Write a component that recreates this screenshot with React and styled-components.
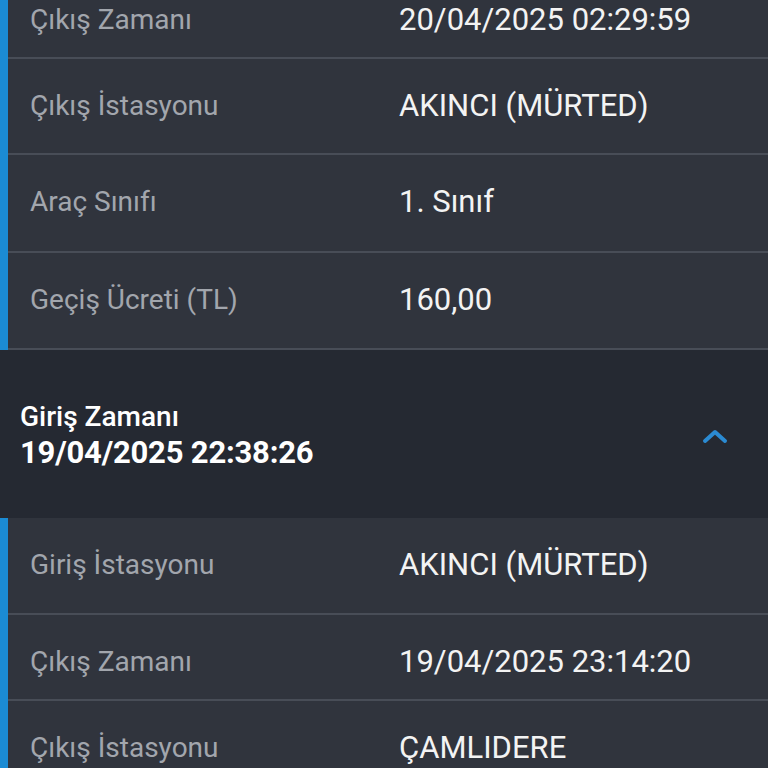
import React from "react";
import styled, { createGlobalStyle } from "styled-components";

const GlobalStyle = createGlobalStyle`
  html, body {
    margin: 0;
    padding: 0;
    background: #30343d;
    overflow: hidden;
  }
  body {
    font-family: Roboto, "Noto Sans", "Liberation Sans", sans-serif;
  }
`;

const Page = styled.div`
  width: 768px;
  height: 768px;
  overflow: hidden;
  display: flex;
  flex-direction: column;
`;

// the screen is scrolled, so the first row is cut off at the top
const Scroller = styled.div`
  margin-top: -27px;
  display: flex;
  flex-direction: column;
`;

const Section = styled.div`
  display: flex;
  background: #30343d;
  border-left: 8px solid #1b8bd3;
`;

const Rows = styled.div`
  flex: 1;
  display: flex;
  flex-direction: column;
`;

const Row = styled.div`
  height: ${(p) => p.$h || 97}px;
  box-sizing: border-box;
  border-bottom: 2px solid #484d57;
  display: grid;
  grid-template-columns: 369px 1fr;
  align-items: center;
  align-content: start;
  padding-left: 22px;
  padding-top: 29px;
  line-height: 36px;
`;

const Label = styled.span`
  font-size: 28px;
  color: #a2a6ad;
`;

const Value = styled.span`
  font-size: 31px;
  color: #f3f3f3;
`;

const Header = styled.div`
  height: 168px;
  background: #252932;
  display: flex;
  align-items: center;
  justify-content: space-between;
  padding: 4px 40px 0 20px;
  box-sizing: border-box;
`;

const HeaderText = styled.div`
  display: flex;
  flex-direction: column;
  color: #ffffff;
`;

const HeaderTitle = styled.span`
  font-size: 28px;
  font-weight: 500;
  line-height: 34px;
`;

const HeaderDate = styled.span`
  font-size: 31px;
  font-weight: 700;
  line-height: 38px;
  letter-spacing: -0.2px;
`;

const Chevron = () => (
  <svg width="26" height="18" viewBox="0 0 26 18">
    <polyline
      points="3,14 13,5 23,14"
      fill="none"
      stroke="#2b8ad2"
      strokeWidth="4"
      strokeLinecap="round"
      strokeLinejoin="round"
    />
  </svg>
);

const firstTrip = [
  { label: "Çıkış Zamanı", value: "20/04/2025 02:29:59", h: 86 },
  { label: "Çıkış İstasyonu", value: "AKINCI (MÜRTED)", h: 96 },
  { label: "Araç Sınıfı", value: "1. Sınıf", h: 98 },
  { label: "Geçiş Ücreti (TL)", value: "160,00", h: 97 },
];

const secondTrip = [
  { label: "Giriş İstasyonu", value: "AKINCI (MÜRTED)", h: 97 },
  { label: "Çıkış Zamanı", value: "19/04/2025 23:14:20", h: 86 },
  { label: "Çıkış İstasyonu", value: "ÇAMLIDERE", h: 97 },
];

export default function App() {
  return (
    <Page>
      <GlobalStyle />
      <Scroller>
        <Section>
          <Rows>
            {firstTrip.map((r) => (
              <Row key={r.label} $h={r.h}>
                <Label>{r.label}</Label>
                <Value>{r.value}</Value>
              </Row>
            ))}
          </Rows>
        </Section>

        <Header>
          <HeaderText>
            <HeaderTitle>Giriş Zamanı</HeaderTitle>
            <HeaderDate>19/04/2025 22:38:26</HeaderDate>
          </HeaderText>
          <Chevron />
        </Header>

        <Section>
          <Rows>
            {secondTrip.map((r) => (
              <Row key={r.label} $h={r.h}>
                <Label>{r.label}</Label>
                <Value>{r.value}</Value>
              </Row>
            ))}
          </Rows>
        </Section>
      </Scroller>
    </Page>
  );
}
